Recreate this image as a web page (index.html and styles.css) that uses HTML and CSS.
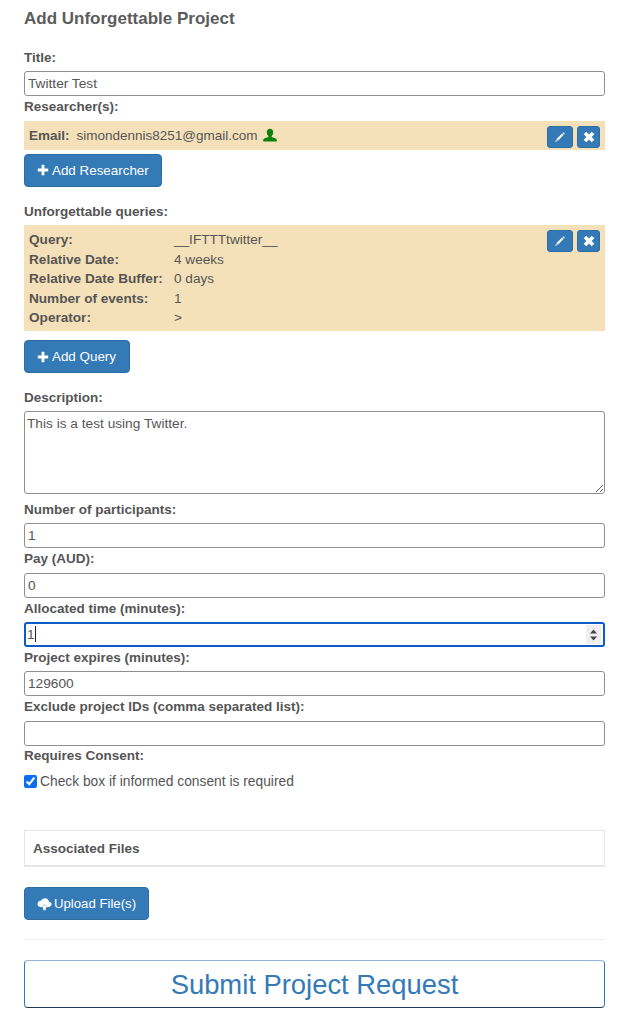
FILE: index.html
```html
<!DOCTYPE html>
<html lang="en">
<head>
    <meta charset="UTF-8">
    <meta name="viewport" content="width=device-width, initial-scale=1.0">
    <title>Add Unforgettable Project</title>
    <link rel="stylesheet" href="styles.css">
</head>
<body>
    <svg class="icon-defs" width="0" height="0">
        <symbol id="i-plus" viewBox="0 0 12 12"><path d="M4.600 0.800h2.800v3.800h3.800v2.800H7.400v3.800H4.600V7.400H0.800V4.600h3.800z"/></symbol>
        <symbol id="i-pencil" viewBox="0 0 12 12"><path d="M9.300 1.300l1.500 1.500-0.900 0.900-1.500-1.500zM7.800 2.800l1.500 1.500-5.400 5.400-1.500-1.500zM1.900 8.700l1.500 1.500-2.100 0.600z"/></symbol>
        <symbol id="i-remove" viewBox="0 0 12 12"><path d="M3.300 0.700L6 3.400l2.700-2.700 2.600 2.600L8.600 6l2.700 2.700-2.600 2.600L6 8.600l-2.700 2.700-2.600-2.600L3.400 6 0.700 3.300z"/></symbol>
    </svg>

    <div class="container">
        <h1>Add Unforgettable Project</h1>

        <label class="field-label" for="title">Title:</label>
        <input class="field" type="text" id="title" value="Twitter Test">

        <label class="field-label">Researcher(s):</label>
        <div class="panel researcher">
            <div class="researcher-info">
                <b>Email:</b>
                <span class="email">simondennis8251@gmail.com</span>
                <svg class="user-icon" viewBox="0 0 14 14"><path d="M7 0.200c2 0 3.200 1.500 3.200 3.500 0 1.400-0.600 2.800-1.400 3.600-0.300 0.300-0.300 1 0 1.300 1 0.700 5 1.200 5 3v1.400H0.200V11.600c0-1.800 4-2.300 5-3 0.300-0.300 0.300-1 0-1.300C4.400 6.500 3.800 5.100 3.800 3.700 3.800 1.700 5 0.200 7 0.200z"/></svg>
            </div>
            <div class="panel-actions">
                <button class="btn btn-xs btn-edit"><svg class="icon"><use href="#i-pencil"/></svg></button>
                <button class="btn btn-xs"><svg class="icon"><use href="#i-remove"/></svg></button>
            </div>
        </div>
        <button class="btn add-researcher"><svg class="icon"><use href="#i-plus"/></svg> Add Researcher</button>

        <label class="field-label queries-label">Unforgettable queries:</label>
        <div class="panel query">
            <dl class="query-info">
                <dt>Query:</dt><dd>__IFTTTtwitter__</dd>
                <dt>Relative Date:</dt><dd>4 weeks</dd>
                <dt>Relative Date Buffer:</dt><dd>0 days</dd>
                <dt>Number of events:</dt><dd>1</dd>
                <dt>Operator:</dt><dd>&gt;</dd>
            </dl>
            <div class="panel-actions">
                <button class="btn btn-xs btn-edit"><svg class="icon"><use href="#i-pencil"/></svg></button>
                <button class="btn btn-xs"><svg class="icon"><use href="#i-remove"/></svg></button>
            </div>
        </div>
        <button class="btn add-query"><svg class="icon"><use href="#i-plus"/></svg> Add Query</button>

        <label class="field-label description-label" for="description">Description:</label>
        <textarea class="field description" id="description">This is a test using Twitter.</textarea>

        <label class="field-label" for="participants">Number of participants:</label>
        <input class="field" type="text" id="participants" value="1">

        <label class="field-label" for="pay">Pay (AUD):</label>
        <input class="field" type="text" id="pay" value="0">

        <label class="field-label" for="allocated">Allocated time (minutes):</label>
        <div class="field field-focus">
            <input class="focus-input" type="text" id="allocated" value="1">
            <span class="caret"></span>
            <svg class="spinner" viewBox="0 0 15 19"><rect width="15" height="19" fill="#efefef"/><path d="M7.500 4.500L11 8.500H4z M7.500 15.500L4 11.500H11z" fill="#444"/></svg>
        </div>

        <label class="field-label" for="expires">Project expires (minutes):</label>
        <input class="field" type="text" id="expires" value="129600">

        <label class="field-label" for="exclude">Exclude project IDs (comma separated list):</label>
        <input class="field" type="text" id="exclude">

        <label class="field-label consent-label">Requires Consent:</label>
        <label class="consent"><input type="checkbox" checked> Check box if informed consent is required</label>

        <div class="files-panel">Associated Files</div>

        <button class="btn upload"><svg class="upload-icon" viewBox="0 0 16 14"><path d="M12.800 4.600C12.500 2.400 10.700 0.800 8.500 0.800 6.800 0.800 5.300 1.800 4.600 3.200 2.500 3.300 0.500 4.900 0.500 7.100c0 1.700 1.200 3 2.900 3h1.900L8 7.300l2.800 2.800h1.700c1.700 0 3-1.300 3-2.800 0-1.400-1.200-2.600-2.700-2.700z"/><path d="M8 7.500L4.800 10.800H6.700V13.600H9.300V10.800H11.200z"/></svg>Upload File(s)</button>

        <hr class="divider">

        <button class="btn-submit">Submit Project Request</button>
    </div>
</body>
</html>
```

FILE: styles.css
```css
* {
    box-sizing: border-box;
}

body {
    font-family: "Liberation Sans", Arial, sans-serif;
    font-size: 13.6px;
    line-height: 20px;
    color: #555;
    background-color: #fff;
    margin: 0;
    padding: 0;
}

.icon-defs {
    position: absolute;
}

.container {
    padding: 0 24px;
}

h1 {
    font-size: 17px;
    line-height: 20px;
    font-weight: bold;
    color: #5c5c5c;
    margin: 0;
    padding: 9px 0 17.67px;
}

.field-label {
    display: block;
    font-size: 13.5px;
    font-weight: bold;
    height: 24.33px;
    padding-top: 1px;
}

.consent-label {
    padding-top: 0;
}

.field {
    display: block;
    width: 100%;
    height: 25px;
    padding: 0 3px;
    font-family: inherit;
    font-size: 13.7px;
    color: #555;
    background: #fff;
    border: 1px solid #8f8f8f;
    border-radius: 3px;
    outline: none;
}

.description {
    height: 83px;
    padding: 4px 2px 2px;
    line-height: 16px;
    margin-bottom: 4.67px;
}

.field-focus {
    display: flex;
    align-items: center;
    border: 2px solid #0b5cc7;
    padding: 0 2px 0 1px;
}

.focus-input {
    width: 8px;
    padding: 0;
    border: none;
    outline: none;
    font-family: inherit;
    font-size: 13.7px;
    color: #555;
}

.caret {
    width: 1px;
    height: 16px;
    background: #222;
}

.spinner {
    width: 15px;
    height: 19px;
    margin-left: auto;
}

.panel {
    display: flex;
    justify-content: space-between;
    align-items: flex-start;
    background-color: #f5e1b9;
    padding: 5px;
}

.researcher {
    height: 29px;
    margin-top: 0.67px;
}

.researcher-info {
    display: flex;
    align-items: center;
    height: 20px;
    font-size: 13.5px;
}

.email {
    margin-left: 7px;
}

.user-icon {
    width: 14px;
    height: 15px;
    margin-left: 5px;
    fill: #0a820a;
}

.panel-actions {
    display: flex;
    gap: 4px;
}

.btn {
    display: inline-flex;
    align-items: center;
    height: 33px;
    padding: 0 12px;
    font-family: inherit;
    font-size: 13.4px;
    color: #fff;
    background-color: #337ab7;
    border: 1px solid #2e6da4;
    border-radius: 4px;
    white-space: pre;
}

.btn-xs {
    justify-content: center;
    width: 23px;
    height: 22px;
    padding: 0;
    border-radius: 3px;
}

.btn-edit {
    width: 26px;
}

.icon {
    width: 12px;
    height: 12px;
    fill: #fff;
}

.add-researcher {
    display: flex;
    margin-top: 4px;
}

.queries-label {
    margin-top: 14px;
}

.query {
    height: 106px;
}

.query-info {
    display: grid;
    grid-template-columns: 145px auto;
    grid-auto-rows: 19.5px;
    margin: 0;
    line-height: 19px;
}

.query-info dt {
    font-weight: bold;
}

.query-info dd {
    margin: 0;
}

.add-query {
    display: flex;
    margin-top: 9px;
    padding-right: 13px;
}

.description-label {
    margin-top: 13.67px;
}

.consent {
    display: flex;
    align-items: center;
    gap: 3px;
    margin-top: 2px;
    font-size: 13.8px;
}

.consent input {
    width: 13px;
    height: 13px;
    margin: 0;
    accent-color: #0b6ef0;
}

.files-panel {
    height: 37px;
    margin-top: 38.33px;
    padding: 8px;
    font-size: 13.5px;
    font-weight: bold;
    border: 1px solid #e6e6e6;
    border-bottom-width: 2px;
}

.upload {
    display: flex;
    margin-top: 20px;
    font-size: 13.2px;
}

.upload-icon {
    width: 15px;
    height: 14px;
    fill: #fff;
    margin-right: 2px;
}

.divider {
    height: 1px;
    margin: 19px 0 20px;
    border: none;
    background: #eee;
}

.btn-submit {
    display: block;
    width: 100%;
    height: 48px;
    padding: 2px 0 0;
    font-family: inherit;
    font-size: 27.4px;
    color: #337ab7;
    background: #fff;
    border: 1px solid #337ab7;
    border-top-color: #8fb4d6;
    border-bottom-color: #1e3c5c;
    border-radius: 4px;
}
```
